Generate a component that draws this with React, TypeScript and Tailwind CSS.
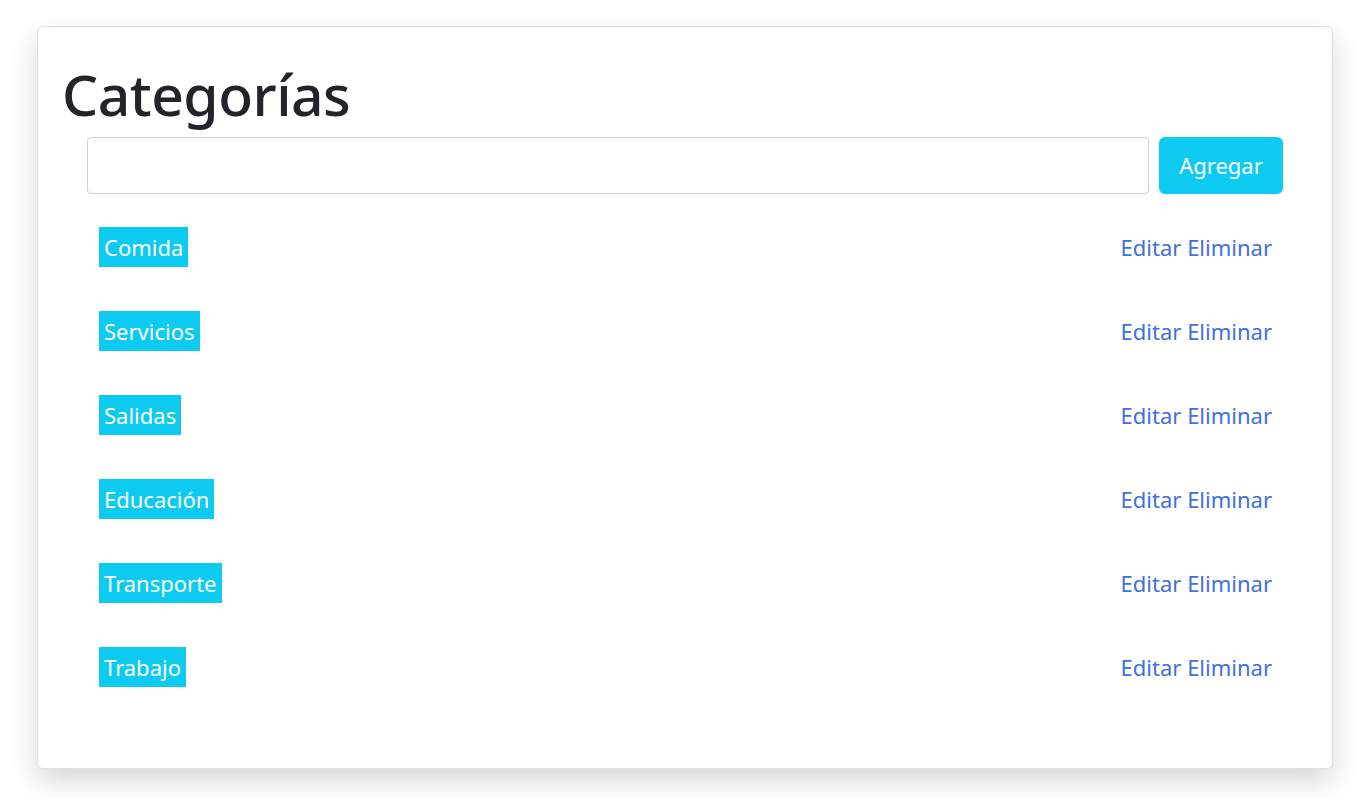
import React from "react";

const items = ["Comida", "Servicios", "Salidas", "Educación", "Transporte", "Trabajo"];

export default function App() {
  return (
    <div className="min-h-[797px] bg-white pt-[26px] pl-[37px] pr-[28px] pb-[28px] [font-family:'Noto_Sans',sans-serif] text-[#212529]">
      <div className="h-[743px] rounded-[6px] border border-[#dee2e6] bg-white shadow-[0_12px_28px_rgba(0,0,0,0.16)] px-6 pt-[32px]">
        <h1 className="text-[57px] leading-[70px] font-medium text-[#212529] tracking-[-0.5px]">Categorías</h1>
        <div className="mx-[25px] mt-[8px]">
          <div className="flex gap-[10px]">
            <input className="flex-1 h-[57px] rounded-[4px] border border-[#ced4da] bg-white px-3 outline-none" />
            <button className="h-[57px] w-[124px] rounded-[6px] bg-[#0dcaf0] text-white text-[22px]">Agregar</button>
          </div>
          <ul className="mt-[11px] px-3">
            {items.map((it) => (
              <li key={it} className="h-[84px] flex items-center justify-between">
                <span className="bg-[#0dcaf0] text-white text-[22px] leading-[40px] px-[5px]">{it}</span>
                <span className="text-[22px] leading-[40px] text-[#4070e0] mr-[-1px]">Editar Eliminar</span>
              </li>
            ))}
          </ul>
        </div>
      </div>
    </div>
  );
}
